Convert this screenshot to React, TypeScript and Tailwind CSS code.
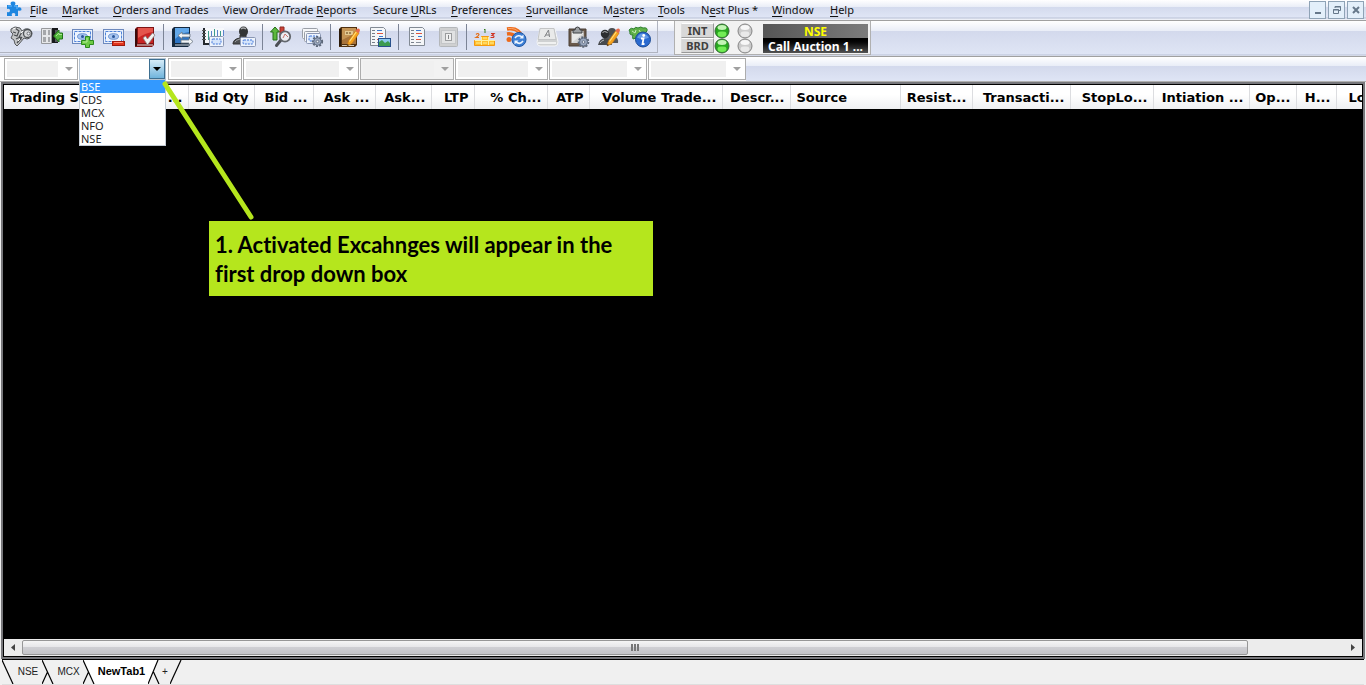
import React from "react";

type Kids = { children: React.ReactNode };

function Icon({ children }: Kids) {
  return (
    <svg viewBox="0 0 24 24" className="h-6 w-6 shrink-0" aria-hidden="true">
      {children}
    </svg>
  );
}

function BlueCard({ x, y, w = 12, h = 8 }: { x: number; y: number; w?: number; h?: number }) {
  return (
    <g>
      <rect x={x + 0.5} y={y + 0.5} width={w} height={h} rx="1" fill="#eef4fd" stroke="#8b97b3" />
      <rect x={x + 3} y={y + 3} width={w - 5} height={h - 5} rx="1" fill="#d4e4fb" stroke="#3f74d9" strokeDasharray="2 1" />
    </g>
  );
}

function Bill() {
  return (
    <g>
      <rect x="1.500" y="4.500" width="20" height="14" fill="#eaf1fc" stroke="#6d89bd" />
      <rect x="3.500" y="6.500" width="16" height="10" fill="#eef4fe" stroke="#4f83d8" strokeDasharray="3 1" />
      <ellipse cx="11.500" cy="11.500" rx="5" ry="2.800" fill="#a9c6f0" stroke="#5380c8" strokeWidth=".8" />
      <circle cx="11.500" cy="11.500" r="1.500" fill="#2a5599" />
    </g>
  );
}

function Gear({ x, y, r = 4 }: { x: number; y: number; r?: number }) {
  return (
    <g>
      <circle cx={x} cy={y} r={r + 0.8} fill="none" stroke="#5c6676" strokeWidth="2" strokeDasharray="2 1.300" />
      <circle cx={x} cy={y} r={r} fill="#9aa7bd" stroke="#5f6c82" />
      <circle cx={x} cy={y} r={r / 3} fill="#edf1f7" stroke="#596577" strokeWidth=".8" />
    </g>
  );
}

function Pencil() {
  return (
    <g>
      <path d="M10 21l1.500-5 7-10 3.500 2.300-7 10.200z" fill="#f6a21d" stroke="#c87a14" strokeWidth=".7" />
      <path d="M12.500 16.500l7-10" stroke="#ffdf7b" strokeWidth="1.200" />
      <path d="M18.500 6l1.200-1.800q2-1.500 3.300.800L22 8.300z" fill="#e86a4a" />
      <path d="M10 21l.5-2 1.500 1z" fill="#222" />
    </g>
  );
}

function Sheet({ x }: { x: number }) {
  return (
    <g>
      <path d={`M${x + 0.5} 2.500h13l2 2v16h-15z`} fill="#f4f6f8" stroke="#828a94" />
      <path d={`M${x + 2} 5.500h3M${x + 2} 8.500h3M${x + 2} 11.500h3M${x + 2} 14.500h3M${x + 2} 17.500h3`} stroke="#777f8a" />
      <path d={`M${x + 7} 5.500h5M${x + 9} 11.500h4`} stroke="#3b7ad1" />
      <path d={`M${x + 7} 8.500h6M${x + 7} 14.500h5`} stroke="#e0563e" />
      <path d={`M${x + 7} 17.500h5`} stroke="#8a929d" />
    </g>
  );
}

const icons: Record<string, React.ReactNode> = {
  Login: (
    <Icon>
      <path d="M2 4l4-2 5 1 2 3 3-2q6-1 7 4 0 5-5 6l-3-1-5 6-2 2-2-2-1-4-3-2 2-4-2-2z" fill="#c4c6c8" stroke="#55585b" />
      <path d="M6 3l4 3-2 5-3-1M10 12l3-5M7 14l4-2 1 3M8 18l5-6M4 7l3 1" stroke="#4a4d50" strokeWidth="1.200" fill="none" />
      <circle cx="18.500" cy="8.500" r="4" fill="#d6d8da" stroke="#4b4f53" strokeWidth="1.300" />
      <circle cx="19.500" cy="8.500" r="1.500" fill="#eef1f8" stroke="#55585b" strokeWidth=".8" />
      <path d="M4 4l3-1M12 8l2-2M9 16l2-2" stroke="#fafafa" />
    </Icon>
  ),
  Logout: (
    <Icon>
      <path d="M1.500 3.500h10v15h-10z" fill="#e6e7e9" stroke="#97999c" />
      <path d="M3 5h3v5H3zM8 5h2v5H8zM3 12h3v5H3zM8 12h2v5H8z" fill="#a5a7aa" />
      <path d="M12 3h6v15h-6z" fill="#17191b" />
      <path d="M15 5h3v12h-3z" fill="#55595c" />
      <path d="M13.500 11l5.500-6v3h3.500v6H19v3z" fill="#55b93e" stroke="#1f7318" />
      <path d="M16 11l3-3v1.500h3" stroke="#a6e48f" fill="none" />
    </Icon>
  ),
  "Add order": (
    <Icon>
      <Bill />
      <path d="M14.500 11.500h4v4h4v4h-4v3h-4v-3h-4v-4h4z" fill="#6dca45" stroke="#2c8a1e" />
      <path d="M16 13v4h-4" stroke="#b7ef9b" fill="none" />
    </Icon>
  ),
  "Remove order": (
    <Icon>
      <Bill />
      <rect x="10.500" y="16.500" width="12" height="4" fill="#e2351e" stroke="#a01a0c" />
      <path d="M12 17.500h9" stroke="#ff927c" />
    </Icon>
  ),
  "Order book": (
    <Icon>
      <path d="M2 4l2-2h17v18l-2 2H2z" fill="#7e1414" />
      <path d="M5 3h15v15H5z" fill="#c92424" />
      <path d="M5 3h15v4Q12 8 5 13z" fill="#e4554c" />
      <path d="M3 4v17" stroke="#3b0b0b" strokeWidth="2" />
      <path d="M4 20h16" stroke="#e7dcdc" />
      <path d="M10 13l2.500-2 2 3 5-6 2.500 2-7.500 10z" fill="#f1f1f1" stroke="#8c8080" strokeWidth=".8" />
    </Icon>
  ),
  "Trade book": (
    <Icon>
      <path d="M2 4l2-2h16v18l-2 2H2z" fill="#15293f" />
      <path d="M5 3h14v15H5z" fill="#2d74c4" />
      <path d="M5 3h14v4Q11 8 5 14z" fill="#62a8ea" />
      <path d="M5 20h14" stroke="#d7dde4" />
      <path d="M8 10.500l4-3.500v2h8v3h-8v2z" fill="#f1f4f7" stroke="#6b7683" strokeWidth=".8" />
      <path d="M23 16.500l-4-3.500v2h-8v3h8v2z" fill="#f1f4f7" stroke="#6b7683" strokeWidth=".8" />
    </Icon>
  ),
  "Market picture": (
    <Icon>
      <rect x="3" y="3" width="20" height="15" fill="#f6f8fb" />
      <path d="M3 3v16h8" fill="none" stroke="#24282d" strokeWidth="2" />
      <path d="M1 5.500h4M1 8.500h4M1 11.500h4M1 14.500h4" stroke="#555" />
      <path d="M7.500 6v9M13.500 4v7M19.500 6v5" stroke="#3e9c8c" />
      <path d="M10.500 6v6M16.500 5v6M22.500 5v6" stroke="#5b82cc" />
      <BlueCard x={8} y={11} w={14} h={10} />
    </Icon>
  ),
  "Client positions": (
    <Icon>
      <path d="M1 19q0-5 7-6v-3h6v3q6 1 7 6z" fill="#505254" stroke="#333" />
      <ellipse cx="11.500" cy="6.500" rx="4.500" ry="5" fill="#333536" />
      <path d="M9 4q2-2 5 0" stroke="#a7a9ab" strokeWidth="1.500" fill="none" />
      <path d="M3 17q1-2 5-3" stroke="#9a9c9e" fill="none" />
      <BlueCard x={8} y={12} w={15} h={9} />
    </Icon>
  ),
  "Order status": (
    <Icon>
      <path d="M6 2l4.500 5H8v8H4V7H1.500z" fill="#5cb83e" stroke="#276e19" />
      <path d="M11 2h4v8h-4z" fill="#cc4236" stroke="#8c2a22" />
      <path d="M12 15l-4.500 5.500" stroke="#4c4f55" strokeWidth="3" strokeLinecap="round" />
      <circle cx="16" cy="11.500" r="5.200" fill="#eceff2" stroke="#63676d" strokeWidth="1.800" />
      <path d="M14 13l2-4 3 3" stroke="#c9766d" fill="none" />
    </Icon>
  ),
  "Order settings": (
    <Icon>
      <rect x="2.500" y="3.500" width="15" height="10" rx="1" fill="#f6f7f9" stroke="#9a9fa7" />
      <rect x="4.500" y="6.500" width="15" height="10" rx="1" fill="#f6f7f9" stroke="#9a9fa7" />
      <BlueCard x={6} y={8} w={14} h={10} />
      <Gear x={17.5} y={16.5} r={3.8} />
    </Icon>
  ),
  Notes: (
    <Icon>
      <path d="M2 4l2-2h16v18l-2 2H2z" fill="#50300f" />
      <path d="M5 3h14v16H5z" fill="#a8733a" />
      <path d="M5 3h14v5L5 15z" fill="#c49455" />
      <path d="M3 4v17" stroke="#2b1a0a" strokeWidth="2" />
      <rect x="8" y="6" width="8" height="4" fill="#e3c891" />
      <path d="M9 8h6" stroke="#5a3b13" strokeDasharray="2 1" />
      <path d="M5 20.500h12" stroke="#d9ccb4" />
      <Pencil />
    </Icon>
  ),
  "Message log": (
    <Icon>
      <Sheet x={2} />
      <rect x="10.500" y="13.500" width="12" height="8" fill="#8cc8ee" stroke="#28518b" />
      <path d="M11 21v-4l3-2 3 3 3-2 2 2v3z" fill="#3c9b50" />
    </Icon>
  ),
  Report: (
    <Icon>
      <Sheet x={4} />
    </Icon>
  ),
  Switch: (
    <Icon>
      <rect x="3.500" y="2.500" width="18" height="19" rx="1" fill="#cfd0d1" stroke="#b4b7ba" />
      <rect x="5.500" y="5.500" width="14" height="13" fill="#e1e2e3" stroke="#c4c6c8" />
      <rect x="9.500" y="8.500" width="6" height="7" fill="#f0f0f0" stroke="#9a9c9e" />
      <path d="M12.500 10v4" stroke="#858789" />
    </Icon>
  ),
  Rankers: (
    <Icon>
      <path d="M8.500 11.500h7v4h6v5h-20v-5h7z" fill="#ffbf2d" stroke="#f4990f" />
      <path d="M8.500 12v8M15.500 12v8M2 15.500h20" stroke="#fff0a0" />
      <path d="M10 13h4M3 18h5M10 18h4M17 18h4" stroke="#ffe073" strokeWidth="1.500" />
      <path d="M11 5l1-1v4" stroke="#377d20" fill="none" />
      <path d="M3 9.500q2-2 3 0 0 1-3 3h3" stroke="#e46c14" fill="none" strokeWidth="1.200" />
      <path d="M18 8.500h3l-2 2q3 0 1.500 2h-3" stroke="#d03524" fill="none" strokeWidth="1.200" />
    </Icon>
  ),
  Feed: (
    <Icon>
      <path d="M3 4q12-2 15 8M3 9q7-1 9 5" stroke="#ec6a1c" fill="none" strokeWidth="3.500" />
      <circle cx="5" cy="14.500" r="2.500" fill="#ec6a1c" />
      <path d="M4 3.500q8-1 12 5" stroke="#f9a76a" fill="none" />
      <circle cx="15" cy="14.500" r="7" fill="#3d7fd4" stroke="#1f57a6" />
      <path d="M11 13q3-4 7-1M19 16q-3 4-7 1" stroke="#edf5ff" fill="none" strokeWidth="1.600" />
      <path d="M19.500 9.500v4h-4zM10.500 19.500v-4h4z" fill="#edf5ff" />
    </Icon>
  ),
  Hotkeys: (
    <Icon>
      <path d="M2 17l3-13q.5-1 2-1h11q2 0 2 1l3 13q0 4-3 4H5q-3 0-3-4z" fill="#cfd1d2" stroke="#f4f5f7" />
      <path d="M5 3.500h14l2 11H3z" fill="#e9eaea" stroke="#c3c5c6" />
      <path d="M9.500 12l4-7 1 7M10.500 10h4" fill="none" stroke="#808285" />
      <path d="M3 18h18" stroke="#fbfbfb" strokeWidth="1.500" />
    </Icon>
  ),
  "Task settings": (
    <Icon>
      <path d="M3 4h17v17H3z" fill="#6a594a" stroke="#4b4037" />
      <path d="M5.500 6h12v12h-12z" fill="#e9e9e8" />
      <path d="M5.500 18l12-10v10z" fill="#d3d4d5" />
      <path d="M7 5h2q0-3 2.500-3T14 5h2v3H7z" fill="#9c9fa2" stroke="#3e4042" />
      <Gear x={17.5} y={17} r={4} />
    </Icon>
  ),
  "Edit users": (
    <Icon>
      <path d="M7 13q0-3 5-3l5 1q5 2 4 7H8z" fill="#55585b" />
      <circle cx="15" cy="7" r="4" fill="#4b4e51" />
      <path d="M1 20q1-6 7-7 6 1 7 7z" fill="#46494c" />
      <circle cx="8" cy="9" r="4.200" fill="#2c2e30" />
      <path d="M5.500 7.500q2-2 5 0M3 18q1-2 4-3" stroke="#b6b9bb" fill="none" />
      <Pencil />
    </Icon>
  ),
  Information: (
    <Icon>
      <path d="M1 5q2-3 5-1 1-3 4-1 3-2 5 0 5-1 4 3l-2 2 1 3-5-1v5q-3 2-5-2l-3 1q-1-3 0-4-4 0-3-3z" fill="#5fb048" stroke="#2f8030" />
      <path d="M4 6l3 2 1-3M11 5l2 3" stroke="#c8ecb8" fill="none" />
      <circle cx="15" cy="14.500" r="7.500" fill="#2a6ad0" stroke="#1a4a94" />
      <path d="M9 12.500q5-8 12 0-6 3-12 0z" fill="#7eaff0" fillOpacity=".7" />
      <circle cx="15.700" cy="10.500" r="1.400" fill="#fff" />
      <path d="M13 13.500h2.500l-1 5.500h2" stroke="#fff" fill="none" strokeWidth="1.800" />
    </Icon>
  ),
};

const toolGroups: string[][] = [
  ["Login", "Logout", "Add order", "Remove order", "Order book"],
  ["Trade book", "Market picture", "Client positions"],
  ["Order status", "Order settings"],
  ["Notes", "Message log"],
  ["Report", "Switch"],
  ["Rankers", "Feed", "Hotkeys", "Task settings", "Edit users", "Information"],
];

const menus: { pre: string; key: string; post: string; width: string }[] = [
  { pre: "", key: "F", post: "ile", width: "w-8" },
  { pre: "", key: "M", post: "arket", width: "w-[51px]" },
  { pre: "", key: "O", post: "rders and Trades", width: "w-[110px]" },
  { pre: "View Order/Trade ", key: "R", post: "eports", width: "w-[150px]" },
  { pre: "Secure ", key: "U", post: "RLs", width: "w-[78px]" },
  { pre: "", key: "P", post: "references", width: "w-[75px]" },
  { pre: "", key: "S", post: "urveillance", width: "w-[77px]" },
  { pre: "M", key: "a", post: "sters", width: "w-[55px]" },
  { pre: "", key: "T", post: "ools", width: "w-[43px]" },
  { pre: "N", key: "e", post: "st Plus *", width: "w-[71px]" },
  { pre: "", key: "W", post: "indow", width: "w-[58px]" },
  { pre: "", key: "H", post: "elp", width: "w-8" },
];

function MenuBar() {
  return (
    <header className="flex h-[21px] items-center border-b border-[#a0a0a0] bg-[linear-gradient(#ffffff_0px,#e9edf7_7px,#d3daed_7px,#dfe5f5_17px,#b9c1d6_18px,#eceff7_19px)] pl-1.5 pr-0.5">
      <svg viewBox="0 0 16 16" className="mb-0.5 h-4 w-4 shrink-0" aria-hidden="true">
        <path d="M1 4h4q-1.500-3.500 2-3.500T9 4h3v2.500q3-1 3.500 1.500T12 9.500V15H9q1-3-1.500-3T6 15H1v-4q3 1 3-1.500T1 8z" fill="#1e86e0" />
        <path d="M2 5h4M8 5h3v3" stroke="#6bbcff" fill="none" />
      </svg>
      <nav className="ml-2 flex" aria-label="Main menu">
        {menus.map((m) => (
          <button key={m.key + m.post} type="button" className={`${m.width} shrink-0 whitespace-nowrap text-left text-[11px] leading-4 text-[#111]`}>
            {m.pre}
            <span className="underline underline-offset-2">{m.key}</span>
            {m.post}
          </button>
        ))}
      </nav>
      <div className="ml-auto flex gap-0.5">
        {["Minimize", "Restore", "Close"].map((label) => (
          <button key={label} type="button" aria-label={label} className="flex h-[18px] w-[17px] items-center justify-center border border-[#8fa3b6] bg-[#e3effa]">
            <svg viewBox="0 0 10 10" className="h-2.5 w-2.5" fill="none" stroke="#66788a">
              {label === "Minimize" && <path d="M2 8h6" strokeWidth="2" />}
              {label === "Restore" && <path d="M3 3V1.500h5.500v4H7M1.500 4.500h5v4h-5zM1 5h6M3 2h6" />}
              {label === "Close" && <path d="M2 2l6 6M8 2l-6 6" strokeWidth="2" />}
            </svg>
          </button>
        ))}
      </div>
    </header>
  );
}

function Led({ on }: { on: boolean }) {
  return (
    <svg viewBox="0 0 16 16" className="h-4 w-4" aria-hidden="true">
      <circle cx="8" cy="8" r="7" fill={on ? "#25a51d" : "#c9c9c9"} stroke={on ? "#39683a" : "#858585"} />
      <ellipse cx="8" cy="11" rx="4.500" ry="3" fill={on ? "#72ec55" : "#e9e9e9"} />
      <ellipse cx="8" cy="4.500" rx="4.500" ry="2.500" fill={on ? "#c4f4b7" : "#f7f7f7"} />
      <path d="M3 8h10" stroke={on ? "#2fae25" : "#cfcfcf"} />
    </svg>
  );
}

function Toolbar() {
  return (
    <div className="flex h-9 border-b border-[#a0a0a0] bg-[linear-gradient(#ffffff_0px,#e9edf7_10px,#d3d9ec_10px,#dfe5f5_33px,#b9c1d6_34px,#eceff7_35px)]">
      <div className="mb-0.5 flex h-8 items-center border-b border-r border-[#b0b4c0] pl-[5px] pr-0.5">
        {toolGroups.map((group, i) => (
          <React.Fragment key={group[0]}>
            {i > 0 && <span className="ml-[3px] mr-0.5 h-[26px] w-px bg-[#7c8496]" />}
            {group.map((name) => (
              <button key={name} type="button" title={name} aria-label={name} className="flex h-7 w-[31px] shrink-0 items-center justify-center">
                {icons[name]}
              </button>
            ))}
          </React.Fragment>
        ))}
      </div>
      <div className="ml-4 flex h-[34px] items-start border-x border-b border-[#b0b0b0] bg-[#f2f2f2] pl-1.5 pr-0.5 pt-0.5">
        <div className="flex flex-col">
          {["INT", "BRD"].map((name) => (
            <div key={name} className="flex h-[15px] items-center">
              <span className="flex h-[15px] w-[33px] items-center justify-center border border-b-[#999] border-l-[#ddd] border-r-[#999] border-t-white bg-[#d8d8d8] text-[11px] font-bold leading-3 text-[#404040]">
                {name}
              </span>
              <Led on={true} />
              <span className="w-[7px]" />
              <Led on={false} />
            </div>
          ))}
        </div>
        <div className="ml-2.5 w-[105px] text-center text-xs font-bold">
          <div className="mt-px h-[14px] bg-linear-to-r from-[#565656] to-[#7c7c7c] leading-4 text-[#ffff00]">NSE</div>
          <div className="h-[15px] overflow-hidden whitespace-nowrap bg-linear-to-b from-black to-[#555] leading-[17px] text-white">Call Auction 1 ...</div>
        </div>
      </div>
    </div>
  );
}

const exchanges = ["BSE", "CDS", "MCX", "NFO", "NSE"];

function Combo({ width, label, full }: { width: string; label: string; full?: boolean }) {
  return (
    <div className={`${width} flex h-[22px] shrink-0 items-center border border-[#adadad] pl-0.5 pr-1 ${full ? "bg-[#f2f2f2]" : "bg-white"}`}>
      <select disabled aria-label={label} className="mr-[7px] h-4 min-w-0 flex-1 appearance-none bg-[#f0f0f0]" />
      <svg viewBox="0 0 8 4" className="h-1 w-2" aria-hidden="true">
        <path d="M0 0h8L4 4z" fill="#a0a0a0" />
      </svg>
    </div>
  );
}

function FilterBar() {
  return (
    <div className="flex h-[25px] items-center border-b border-[#b0b0b0] bg-[linear-gradient(#ffffff_0px,#e9edf7_9px,#d3d9ec_9px,#dfe5f5_24px)]">
      <div className="flex h-6 items-center gap-px bg-white pl-1">
        <Combo width="w-[74px]" label="Instrument" />
        <div className="relative h-[22px] w-[88px] pr-px">
          <div className="flex h-full border border-[#b7c5d3] bg-white">
            <select aria-label="Exchange" defaultValue="" className="min-w-0 flex-1 appearance-none text-[11px]">
              <option value="" />
              {exchanges.map((e) => (
                <option key={e}>{e}</option>
              ))}
            </select>
            <span className="flex w-4 items-center justify-center border border-[#3d6f91] bg-linear-to-b from-[#d6ecf8] to-[#6fb4dc]">
              <svg viewBox="0 0 8 4" className="h-1 w-2" aria-hidden="true">
                <path d="M0 0h8L4 4z" fill="#000" />
              </svg>
            </span>
          </div>
          <ul className="absolute left-0 top-full z-10 w-[87px] border border-t-0 border-[#c5cdd6] bg-white" role="listbox" aria-label="Exchanges">
            {exchanges.map((e, i) => (
              <li key={e} role="option" aria-selected={i === 0} className={`h-[13px] pl-px text-[11px] leading-[13px] ${i === 0 ? "bg-[#3399ff] text-white" : "text-[#222]"}`}>
                {e}
              </li>
            ))}
          </ul>
        </div>
        <Combo width="w-[74px]" label="Symbol" />
        <Combo width="w-[116px]" label="Series" />
        <Combo width="w-[94px]" label="Expiry" full />
        <Combo width="w-[93px]" label="Strike price" />
        <Combo width="w-[98px]" label="Option type" />
        <Combo width="w-[98px]" label="Lot type" />
      </div>
    </div>
  );
}

const columns: { name: string; width: string; left?: boolean }[] = [
  { name: "Trading S...", width: "w-[99px]", left: true },
  { name: "...", width: "w-[85px]" },
  { name: "Bid Qty", width: "w-[66px]" },
  { name: "Bid ...", width: "w-[59px]" },
  { name: "Ask ...", width: "w-[62px]" },
  { name: "Ask...", width: "w-[56px]" },
  { name: "LTP", width: "w-[43px]" },
  { name: "% Ch...", width: "w-[73px]" },
  { name: "ATP", width: "w-[42px]" },
  { name: "Volume Trade...", width: "w-[133px]" },
  { name: "Descr...", width: "w-[68px]" },
  { name: "Source", width: "w-[110px]", left: true },
  { name: "Resist...", width: "w-[72px]" },
  { name: "Transacti...", width: "w-[98px]" },
  { name: "StopLo...", width: "w-[83px]" },
  { name: "Intiation ...", width: "w-[96px]" },
  { name: "Op...", width: "w-[47px]" },
  { name: "H...", width: "w-[40px]" },
  { name: "Lo", width: "w-auto" },
];

function MarketWatch() {
  return (
    <main className="mx-px flex flex-1 flex-col border-2 border-[#77777b]">
      <div className="flex flex-1 flex-col border border-black bg-black">
        <table className="w-full table-fixed border-collapse">
          <thead>
            <tr className="h-6 bg-linear-to-b from-white from-40% to-[#eff0f2]">
              {columns.map((c, i) => (
                <th
                  key={i}
                  className={`${c.width} ${c.left ? "pl-1.5 text-left" : i === columns.length - 1 ? "pl-3 text-left" : "pr-[5px] text-right"} overflow-hidden whitespace-nowrap border-r border-[#dcdde0] pb-0 pt-0.5 font-['DejaVu_Sans',sans-serif] text-[13px] font-bold leading-4 text-black last:border-r-0`}
                >
                  {c.name}
                </th>
              ))}
            </tr>
          </thead>
        </table>
        <div className="flex-1" />
        <div className="flex h-[17px] items-center bg-[#ececec]">
          <button type="button" aria-label="Scroll left" className="flex h-full w-[18px] items-center justify-center">
            <svg viewBox="0 0 4 7" className="h-[7px] w-1">
              <path d="M4 0v7L0 3.500z" fill="#444" />
            </svg>
          </button>
          <div className="mr-24 flex h-[15px] flex-1 items-center justify-center gap-px rounded-xs border border-[#979797] bg-[linear-gradient(#f5f5f5_0%,#e6e6e8_48%,#cfcfd3_50%,#c4c4c8_100%)]">
            <span className="h-[7px] w-0.5 bg-[#777]" />
            <span className="h-[7px] w-0.5 bg-[#777]" />
            <span className="h-[7px] w-0.5 bg-[#777]" />
          </div>
          <button type="button" aria-label="Scroll right" className="flex h-full w-[18px] items-center justify-center">
            <svg viewBox="0 0 4 7" className="h-[7px] w-1">
              <path d="M0 0v7l4-3.500z" fill="#444" />
            </svg>
          </button>
        </div>
      </div>
    </main>
  );
}

function Edge({ kind, white }: { kind: "start" | "cross" | "end"; white?: "left" | "right" }) {
  return (
    <svg viewBox="0 0 12 24" className="h-6 w-3 shrink-0" aria-hidden="true">
      {white === "right" && <path d="M0 0h12v24h-1z" fill="#fff" />}
      {white === "left" && <path d="M0 0h10L0 24z" fill="#fff" />}
      <g stroke="#000" strokeWidth="1.200" fill="none">
        {kind === "start" && <path d="M0 0l11 24" />}
        {kind === "cross" && white !== "left" && <path d="M0 0l11 24M5.500 12L0 24" />}
        {kind === "cross" && white === "left" && <path d="M10 0L0 24M5.500 12l5.500 12" />}
        {kind === "end" && <path d="M11 0L0 24" />}
      </g>
    </svg>
  );
}

function SheetTabs() {
  return (
    <footer className="mx-0.5 flex h-[26px] border-b border-t border-b-[#dedede] border-t-black bg-[#f0f0f0] font-['Liberation_Sans',sans-serif] text-[10px] text-[#222]">
      <Edge kind="start" />
      <button type="button" className="w-7 pb-0.5">NSE</button>
      <Edge kind="cross" />
      <button type="button" className="w-[29px] pb-0.5">MCX</button>
      <Edge kind="cross" white="right" />
      <button type="button" className="w-[53px] bg-white pb-0.5 text-[11px] font-bold text-black">NewTab1</button>
      <Edge kind="cross" white="left" />
      <button type="button" aria-label="Add tab" className="w-2.5 pb-0.5">+</button>
      <Edge kind="end" />
    </footer>
  );
}

export default function App() {
  return (
    <div className="relative flex min-h-screen flex-col overflow-hidden bg-[#f0f0f0] font-['Noto_Sans',sans-serif]">
      <MenuBar />
      <Toolbar />
      <FilterBar />
      <MarketWatch />
      <SheetTabs />
      <svg viewBox="0 0 96 142" className="pointer-events-none absolute left-40 top-20 z-20 h-[142px] w-24" aria-hidden="true">
        <path d="M5 4l86 133" stroke="#b5e61d" strokeWidth="5" strokeLinecap="round" />
      </svg>
      <aside className="absolute left-[209px] top-[221px] z-20 w-[444px] bg-[#b5e61d] px-1.5 pb-2 pt-[9px] font-['Lato',sans-serif] text-[22px] font-bold leading-[29px] text-black [font-variant-ligatures:none]">
        <p>1. Activated Excahnges will appear in the first drop down box</p>
      </aside>
    </div>
  );
}
